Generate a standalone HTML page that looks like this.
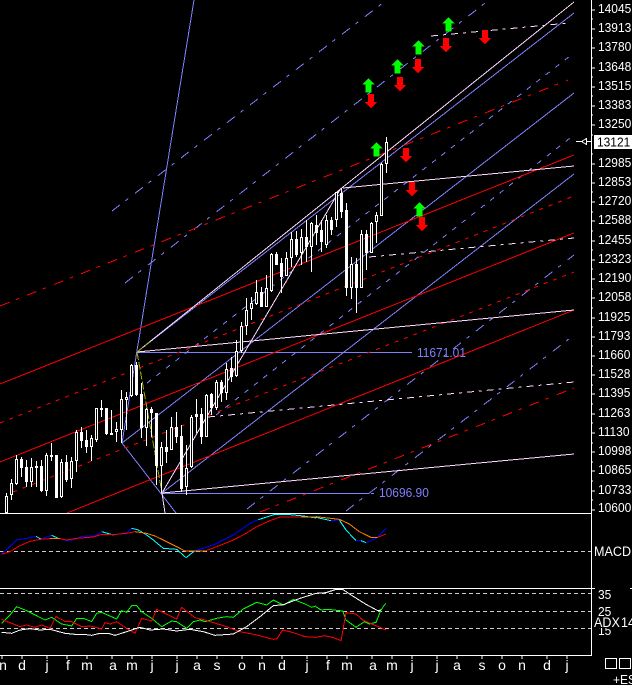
<!DOCTYPE html>
<html><head><meta charset="utf-8"><style>
html,body{margin:0;padding:0;background:#000;width:632px;height:685px;overflow:hidden}
svg{display:block}
text{font-family:"Liberation Sans",sans-serif;font-size:13px;fill:#fff}
.l line,.l path{vector-effect:non-scaling-stroke}
</style></head><body>
<svg width="632" height="685" viewBox="0 0 632 685" xmlns="http://www.w3.org/2000/svg" shape-rendering="crispEdges" fill="none">
<!-- blue solid -->
<g stroke="#8080ff">
<path d="M194 0L122 443L176 513"/>
<path d="M137 352L574 13M122 443L574 93M162 493L574 174"/>
<path d="M137 352.5H412M162 493.5H369M371 493.5H374"/>
<g stroke-dasharray="10 7 3.5 8.5">
<path d="M112 211L384 2M125 283L489 0M247 509L574 255M346 511L574 335"/>
</g>
<g stroke-dasharray="5 7">
<path d="M147 383L574 53M216 415L574 135"/>
</g>
</g>
<!-- red -->
<g stroke="#ff0000">
<path d="M0 384L574 155M0 462L574 233M67 513L574 310"/>
<path stroke-dasharray="10 7 3.5 8.5" d="M0 306L568 80M260 512L574 388"/>
<path stroke-dasharray="4 6" d="M0 423L574 196M13 492L574 272"/>
</g>
<!-- pink -->
<g stroke="#ffd8ff">
<path d="M137 352L574 2M137 352L574 310M343 188L574 166M162 493L574 454M162 493L341 188M162 493L165 513"/>
<g stroke-dasharray="7 5 3 5">
<path d="M208 417L574 382M369 257L574 238"/>
<path d="M431 36L569 23"/>
</g>
</g>
<path stroke="#99aa00" stroke-dasharray="8 2" d="M137 352L162 493M137 352L150 342"/>
<!-- candles -->
<g stroke="#fff">
<path d="M6.5 493V513M11.5 479V500M16.5 455V485M21.5 457V477M26.5 460V487M31.5 458V487M36.5 461V487M41.5 460V492M46.5 453V496M51.5 443V461M56.5 455V498M61.5 459V498M66.5 455V482M71.5 457V488M76.5 430V472M81.5 427V448M86.5 430V453M91.5 435V461M96.5 408V442M101.5 400V417M106.5 408V435M111.5 410V435M116.5 422V442M121.5 390V443M126.5 392V430M131.5 364V397M136.5 362V396M141.5 383V438M146.5 408V446M151.5 407V437M156.5 413V485M161.5 442V493M166.5 430V463M171.5 417V450M176.5 412V443M181.5 425V492M186.5 445V495M191.5 415V468M196.5 399V433M201.5 408V444M206.5 394V437M211.5 393V415M216.5 380V410M221.5 380V402M226.5 363V400M231.5 357V382M236.5 340V377M241.5 322V353M246.5 298V335M251.5 297V320M256.5 280V305M261.5 287V307M266.5 275V307M271.5 253V292M276.5 252V265M281.5 258V293M286.5 252V276M291.5 232V267M296.5 231V257M301.5 229V265M306.5 220V262M311.5 222V272M316.5 215V245M321.5 220V252M326.5 215V248M331.5 217V235M336.5 192V227M341.5 188V218M346.5 203V296M351.5 257V299M356.5 258V313M361.5 230V288M366.5 230V270M371.5 222V253M376.5 212V243M381.5 163V216M386.5 137V173"/>
</g>
<path fill="#fff" d="M20 459h3V468h-3zM25 467h3V482h-3zM35 466h3V468h-3zM40 466h3V491h-3zM50 455h3V457h-3zM55 455h3V498h-3zM65 462h3V480h-3zM80 432h3V441h-3zM85 440h3V447h-3zM100 408h3V410h-3zM105 408h3V434h-3zM110 433h3V435h-3zM135 365h3V395h-3zM140 394h3V428h-3zM150 409h3V413h-3zM155 413h3V466h-3zM165 447h3V452h-3zM175 427h3V437h-3zM180 436h3V489h-3zM195 414h3V417h-3zM200 414h3V437h-3zM210 394h3V408h-3zM220 382h3V393h-3zM230 368h3V377h-3zM260 292h3V307h-3zM275 254h3V265h-3zM280 263h3V277h-3zM295 239h3V255h-3zM305 237h3V247h-3zM315 225h3V233h-3zM320 230h3V242h-3zM330 220h3V230h-3zM340 193h3V212h-3zM345 210h3V288h-3zM355 264h3V288h-3zM365 234h3V253h-3z"/>
<path fill="#000" stroke="#fff" d="M5.5 496.5h2V512.5h-2zM10.5 483.5h2V494.5h-2zM15.5 459.5h2V483.5h-2zM30.5 467.5h2V481.5h-2zM45.5 455.5h2V490.5h-2zM60.5 462.5h2V496.5h-2zM70.5 461.5h2V478.5h-2zM75.5 432.5h2V460.5h-2zM90.5 438.5h2V446.5h-2zM95.5 408.5h2V439.5h-2zM115.5 429.5h2V431.5h-2zM120.5 399.5h2V429.5h-2zM125.5 397.5h2V399.5h-2zM130.5 365.5h2V395.5h-2zM145.5 409.5h2V427.5h-2zM160.5 447.5h2V465.5h-2zM170.5 427.5h2V449.5h-2zM185.5 468.5h2V486.5h-2zM190.5 417.5h2V466.5h-2zM205.5 395.5h2V436.5h-2zM215.5 382.5h2V407.5h-2zM225.5 369.5h2V392.5h-2zM235.5 351.5h2V375.5h-2zM240.5 326.5h2V350.5h-2zM245.5 310.5h2V325.5h-2zM250.5 303.5h2V308.5h-2zM255.5 292.5h2V303.5h-2zM265.5 288.5h2V306.5h-2zM270.5 254.5h2V290.5h-2zM285.5 258.5h2V275.5h-2zM290.5 239.5h2V257.5h-2zM300.5 237.5h2V252.5h-2zM310.5 223.5h2V246.5h-2zM325.5 220.5h2V244.5h-2zM335.5 192.5h2V219.5h-2zM350.5 264.5h2V287.5h-2zM360.5 234.5h2V287.5h-2zM370.5 223.5h2V252.5h-2zM375.5 215.5h2V221.5h-2zM380.5 164.5h2V215.5h-2zM385.5 142.5h2V163.5h-2z"/>
<!-- arrows -->
<path fill="#00ff00" d="M368.5 78l6 6.5h-3v8h-6v-8h-3zM397.5 59l6 6.5h-3v8h-6v-8h-3zM418.5 40l6 6.5h-3v8h-6v-8h-3zM448.5 17l6 6.5h-3v8h-6v-8h-3zM376.5 142l6 6.5h-3v8h-6v-8h-3zM419.5 202l6 6.5h-3v8h-6v-8h-3z"/>
<path fill="#ff0000" d="M368 94h6v8h3l-6 6.5l-6-6.5h3zM397 77h6v8h3l-6 6.5l-6-6.5h3zM415 59h6v8h3l-6 6.5l-6-6.5h3zM443 38h6v8h3l-6 6.5l-6-6.5h3zM482 30h6v8h3l-6 6.5l-6-6.5h3zM403 148h6v8h3l-6 6.5l-6-6.5h3zM409 182h6v8h3l-6 6.5l-6-6.5h3zM419 217h6v8h3l-6 6.5l-6-6.5h3z"/>
<g transform="translate(417 0) scale(.92 1)"><text x="0" y="357" style="fill:#8080ff">11671.01</text></g>
<g transform="translate(379 0) scale(.92 1)"><text x="0" y="497" style="fill:#8080ff">10696.90</text></g>
<!-- dashed levels -->
<path stroke="#ccc" stroke-dasharray="4 3" d="M0 551.5H591M0 593.5H591M0 611.5H591M0 628.5H591"/>
<!-- MACD and ADX -->
<g class="l">
<g transform="translate(0,510) scale(.33333)">
<path stroke="#0000ff" d="M5 130L25 115L50 90L80 85L108 79M122 87L155 76M175 85L200 92L225 88L245 79L285 78L305 65M340 75L380 68L395 55M585 122L640 105L700 75L750 40L775 29"/>
<path stroke="#00ffff" d="M108 79L122 87M155 76L175 85M305 65L340 75M395 55L415 60L440 75L460 90L490 115L530 118L558 143L585 122M775 29L825 13L870 14L910 18L948 24"/>
<path stroke="#ff0000" d="M5 133L30 125L60 107L90 94L120 88L150 86M180 86L200 90L230 85L280 81L305 73L340 74L380 70L405 65M615 123L650 110L700 90L735 72L770 50L810 32L840 21L905 21"/>
<path stroke="#ff8000" d="M150 86L180 86M405 65L440 70L465 78L500 95L530 110L555 123L615 123M905 21L948 21"/>
<path stroke="#00ff00" d="M5 340L30 315L50 290L80 302L135 330L155 322L185 342L215 348L230 325L250 325L275 335L290 310L305 307L350 327L365 302L380 307L395 287L410 287L425 305L455 325L485 350L515 333L530 335L560 355L580 335L600 330L615 335L650 325L680 320L700 322L730 297L770 277L800 285L820 270L850 285L880 268L915 282L935 292L948 288"/>
<path stroke="#ff0000" d="M5 328L30 338L60 350L80 345L105 352L125 345L150 355L168 320L195 334L215 335L245 350L270 348L305 357L315 338L330 342L350 335L380 355L405 370L425 325L455 333L470 298L530 327L545 292L585 323L615 330L670 347L720 365L770 375L820 388L830 387L848 360L880 368L915 380L948 382"/>
<path stroke="#fff" d="M5 367L35 370L60 360L90 356L120 360L150 358L195 370L225 373L250 373L275 376L300 370L325 370L345 376L380 365L420 352L450 360L490 357L530 363L570 358L610 365L645 376L700 372L740 350L780 320L820 287L850 284L900 265L948 250"/>
</g>
<g transform="translate(316,510) scale(.33333)">
<path stroke="#00ffff" d="M0 22L45 32L70 30L90 60L120 92M135 92L150 98"/>
<path stroke="#0000ff" d="M45 32L70 30M120 92L135 92M150 98L180 85L210 55"/>
<path stroke="#ff8000" d="M0 20L70 28L100 42L130 65L165 82L185 82"/>
<path stroke="#ff0000" d="M185 82L210 72"/>
<path stroke="#00ff00" d="M0 290L15 300L35 298L80 303L90 330L120 352L145 335L160 342L180 337L195 300L209 280"/>
<path stroke="#ff0000" d="M0 382L25 377L50 382L75 392L90 308L120 312L140 330L170 343L210 360"/>
<path stroke="#fff" d="M0 250L30 248L60 238L80 238L110 258L150 283L185 302L195 300"/>
</g>
</g>
<!-- frame -->
<path stroke="#fff" d="M591.5 0V655M0 513.5H591M0 588.5H595M630 588.5H632M0 655.5H592"/>
<path stroke="#fff" d="M591 10H595M591 19H593M591 29H595M591 38H593M591 48H595M591 58H593M591 68H595M591 77H593M591 87H595M591 96H593M591 106H595M591 115H593M591 125H595M591 135H593M591 154H593M591 164H595M591 173H593M591 183H595M591 192H593M591 202H595M591 212H593M591 221H595M591 231H593M591 241H595M591 250H593M591 260H595M591 269H593M591 279H595M591 289H593M591 298H595M591 308H593M591 318H595M591 327H593M591 337H595M591 346H593M591 356H595M591 366H593M591 375H595M591 385H593M591 394H595M591 404H593M591 414H595M591 423H593M591 433H595M591 443H593M591 452H595M591 462H593M591 471H595M591 481H593M591 491H595M591 500H593M591 510H595"/>
<path stroke="#fff" d="M2 655V659M22 655V659M47 655V659M67 655V659M87 655V659M112 655V659M132 655V659M152 655V659M177 655V659M197 655V659M217 655V659M242 655V659M262 655V659M282 655V659M307 655V659M327 655V659M347 655V659M372 655V659M392 655V659M412 655V659M437 655V659M457 655V659M482 655V659M502 655V659M522 655V659M547 655V659M567 655V659"/>
<!-- current price pointer -->
<path stroke="#fff" d="M576 141.5H591"/>
<path fill="#000" stroke="#fff" d="M581.5 141.5L586.5 138.5V144.5Z"/>
<!-- price labels -->
<g transform="translate(598 0) scale(.92 1)">
<text x="0" y="13">14045</text><text x="0" y="32">13913</text><text x="0" y="51">13780</text><text x="0" y="71">13648</text><text x="0" y="90">13515</text><text x="0" y="109">13383</text><text x="0" y="128">13250</text>
<text x="0" y="167">12985</text><text x="0" y="186">12853</text><text x="0" y="205">12720</text><text x="0" y="224">12588</text><text x="0" y="244">12455</text><text x="0" y="263">12323</text><text x="0" y="282">12190</text><text x="0" y="301">12058</text><text x="0" y="321">11925</text><text x="0" y="340">11793</text><text x="0" y="359">11660</text><text x="0" y="378">11528</text><text x="0" y="397">11395</text><text x="0" y="417">11263</text><text x="0" y="436">11130</text><text x="0" y="455">10998</text><text x="0" y="474">10865</text><text x="0" y="494">10733</text><text x="0" y="512">10600</text>
<text x="0" y="599">35</text><text x="0" y="616">25</text><text x="0" y="635">15</text>
</g>
<rect x="594" y="135" width="38" height="14" fill="#fff"/>
<g transform="translate(597 0) scale(.92 1)"><text x="0" y="146.5" style="fill:#000">13121</text></g>
<g transform="translate(594 0) scale(.9 1)"><text x="0" y="556" style="font-size:14px">MACD</text></g>
<rect x="594" y="617" width="38" height="11" fill="#000"/>
<g transform="translate(594 0) scale(.9 1)"><text x="0" y="627" style="font-size:14px">ADX</text></g>
<g transform="translate(621 0) scale(.9 1)"><text x="0" y="627" style="font-size:14px">14</text></g>
<!-- month labels -->
<g style="text-anchor:middle">
<text x="3" y="670" style="font-size:14px">n</text><text x="22" y="670" style="font-size:14px">d</text><text x="47" y="670" style="font-size:14px">j</text><text x="68" y="670" style="font-size:14px">f</text><text x="87" y="670" style="font-size:14px">m</text><text x="113" y="670" style="font-size:14px">a</text><text x="132" y="670" style="font-size:14px">m</text><text x="152" y="670" style="font-size:14px">j</text><text x="177" y="670" style="font-size:14px">j</text><text x="197" y="670" style="font-size:14px">a</text><text x="217" y="670" style="font-size:14px">s</text><text x="242" y="670" style="font-size:14px">o</text><text x="262" y="670" style="font-size:14px">n</text><text x="282" y="670" style="font-size:14px">d</text><text x="307" y="670" style="font-size:14px">j</text><text x="328" y="670" style="font-size:14px">f</text><text x="347" y="670" style="font-size:14px">m</text><text x="373" y="670" style="font-size:14px">a</text><text x="392" y="670" style="font-size:14px">m</text><text x="412" y="670" style="font-size:14px">j</text><text x="437" y="670" style="font-size:14px">j</text><text x="457" y="670" style="font-size:14px">a</text><text x="482" y="670" style="font-size:14px">s</text><text x="502" y="670" style="font-size:14px">o</text><text x="522" y="670" style="font-size:14px">n</text><text x="547" y="670" style="font-size:14px">d</text><text x="567" y="670" style="font-size:14px">j</text>
</g>
<path stroke="#fff" d="M605.5 658.5H616.5V668.5H605.5ZM619.5 658.5H630.5V668.5H619.5Z"/>
<g transform="translate(613 0) scale(.92 1)"><text x="0" y="684">+ES</text></g>
</svg>
</body></html>
